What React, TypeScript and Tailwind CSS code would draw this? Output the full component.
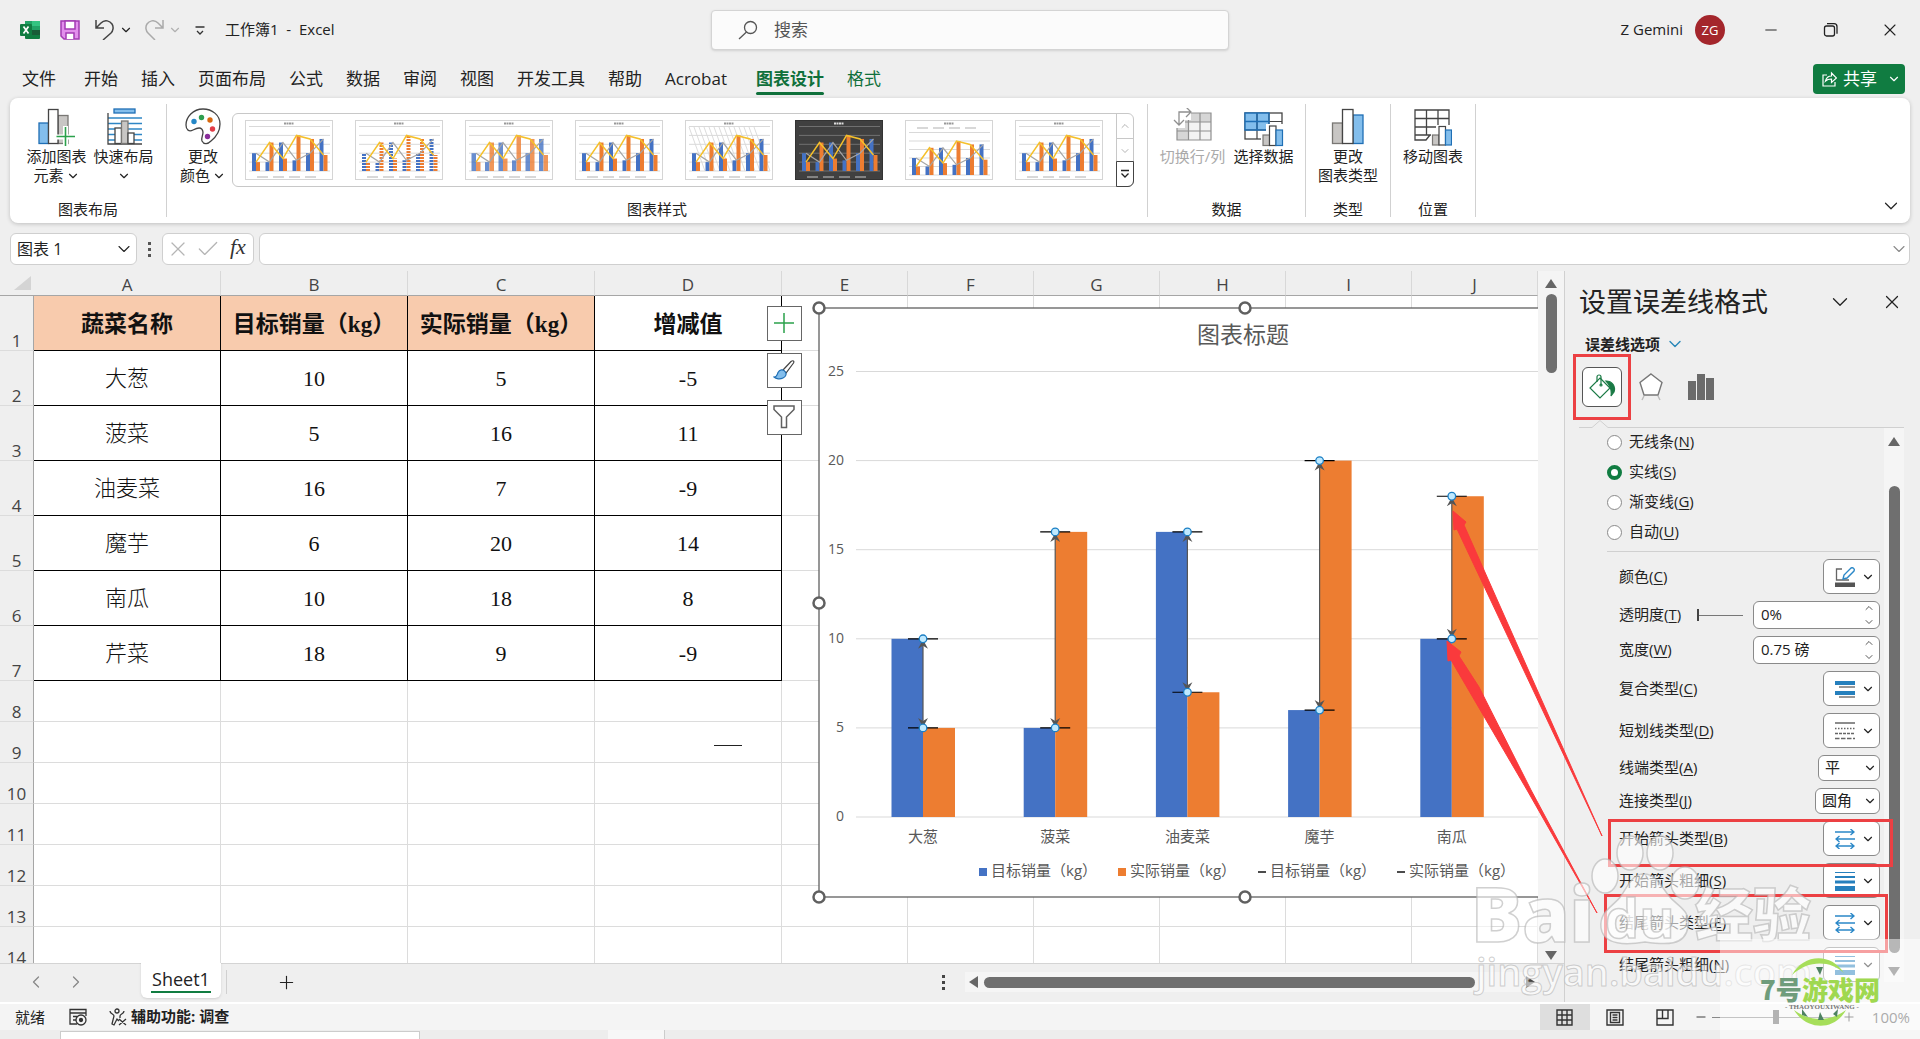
import React from "react";
import { ChevronDown, ChevronLeft, ChevronRight, ChevronUp, Minus, Plus, X, Check } from "lucide-react";

const tabs = ["开始", "插入", "页面布局", "公式", "数据", "审阅", "视图", "开发工具", "帮助", "Acrobat"];

const sales = [
  { name: "大葱", target: 10, actual: 5 },
  { name: "菠菜", target: 5, actual: 16 },
  { name: "油麦菜", target: 16, actual: 7 },
  { name: "魔芋", target: 6, actual: 20 },
  { name: "南瓜", target: 10, actual: 18 },
  { name: "芹菜", target: 18, actual: 9 },
];

const BLUE = "#4472c4";
const ORANGE = "#ed7d31";

/* ---------- Title bar ---------- */

const TitleBar = () => (
  <header className="flex h-[60px] shrink-0 items-center">
    <div className="flex flex-1 items-center pl-5">
      <svg width="20" height="20" viewBox="0 0 20 20">
        <path d="M5 1h14a1 1 0 0 1 1 1v8H5z" fill="#21a366" />
        <path d="M12 1h7a1 1 0 0 1 1 1v4h-8z" fill="#33c481" />
        <path d="M5 10h15v8a1 1 0 0 1-1 1H6a1 1 0 0 1-1-1z" fill="#107c41" />
        <path d="M12 10h8v5h-8z" fill="#185c37" />
        <rect x="0" y="4" width="12" height="12" rx="1" fill="#107c41" />
        <path d="M3.5 6.5l5 7M8.500 6.500l-5 7" stroke="#fff" strokeWidth="1.700" />
      </svg>
      <button aria-label="保存" className="ml-5">
        <svg width="20" height="20" viewBox="0 0 20 20" fill="none" stroke="#a33bb3" strokeWidth="1.5">
          <path d="M1 1h18v18H4l-3-3z" fill="#e28fec" />
          <path d="M5 1h10v8H5zM6 19v-6h8v6" fill="#fff" />
        </svg>
      </button>
      <button aria-label="撤消" className="ml-[15px] flex items-center gap-1">
        <svg width="20" height="20" viewBox="0 0 20 20" fill="none" stroke="#444" strokeWidth="1.5">
          <path d="M1 0v8h8M1 8l5-5c4-4 9-2 11 1s1 7-1 9l-8 7" />
        </svg>
        <ChevronDown size={14} />
      </button>
      <button aria-label="恢复" className="ml-[11px] flex items-center gap-1 text-[#b0b0b0]">
        <svg width="20" height="20" viewBox="0 0 20 20" fill="none" stroke="#aaa" strokeWidth="1.5">
          <path d="M19 0v8h-8M19 8l-5-5c-4-4-9-2-11 1s-1 7 1 9l7 7" />
        </svg>
        <ChevronDown size={14} />
      </button>
      <button aria-label="自定义快速访问工具栏" className="ml-[10px]">
        <svg width="16" height="16" viewBox="0 0 16 16" fill="none" stroke="#333" strokeWidth="1.3">
          <path d="M3.500 5h9M5 9l3 3 3-3" />
        </svg>
      </button>
      <span className="ml-[17px] whitespace-pre pb-[2px] text-[15px]">工作簿1  -  Excel</span>
    </div>
    <label className="ml-5 flex h-10 w-[518px] items-center rounded border border-[#d4d4d4] bg-[#fbfbfb] pl-[26px] shadow-sm">
      <svg width="20" height="20" viewBox="0 0 20 20" fill="none" stroke="#555" strokeWidth="1.3">
        <circle cx="12.500" cy="7.500" r="6" />
        <path d="M8.500 12L1 19" />
      </svg>
      <input aria-label="搜索" placeholder="搜索" className="ml-4 flex-1 bg-transparent text-[17px] outline-none placeholder:text-[#555]" />
    </label>
    <div className="flex flex-1 items-center justify-end pr-5">
      <span className="pb-[2px] text-[15px]">Z Gemini</span>
      <span className="ml-3 flex size-[30px] items-center justify-center rounded-full bg-[#a4262c] text-[13px] text-white">ZG</span>
      <button aria-label="最小化" className="ml-[37px]"><Minus size={18} strokeWidth={1.3} /></button>
      <button aria-label="还原" className="ml-[42px]">
        <svg width="18" height="18" viewBox="0 0 18 18" fill="none" stroke="#222" strokeWidth="1.3">
          <rect x="2.500" y="5" width="10" height="10" rx="2" />
          <path d="M5 2.700h7a3 3 0 0 1 3 3v7" />
        </svg>
      </button>
      <button aria-label="关闭" className="ml-10"><X size={20} strokeWidth={1.3} /></button>
    </div>
  </header>
);

const RibbonTabs = () => (
  <nav className="flex h-[38px] shrink-0 items-center gap-[23px] pr-[15px] pl-[22px] text-[17px]">
    <button className="mr-[5px]">文件</button>
    {tabs.map((t) => (
      <button key={t}>{t}</button>
    ))}
    <button className="relative ml-[6px] font-bold text-[#0f703b]">
      图表设计
      <span className="absolute -bottom-1 left-0 h-[3px] w-full rounded bg-[#0f703b]" />
    </button>
    <button className="text-[#0f703b]">格式</button>
    <button className="ml-auto flex h-[30px] w-[92px] items-center rounded bg-[#107c41] pl-[9px] text-white">
      <svg width="15" height="16" viewBox="0 0 15 16" fill="none" stroke="#fff" strokeWidth="1.200">
        <path d="M5 4H1v11h12v-4M3.500 10c1-4 3-5 6-5V2l5 5-5 4.500V8c-3 0-4.500.5-6 2z" />
      </svg>
      <span className="ml-[6px]">共享</span>
      <ChevronDown size={14} className="ml-[10px]" />
    </button>
  </nav>
);

/* ---------- Ribbon ---------- */

const AddElementIcon = () => (
  <svg width="38" height="39" viewBox="0 0 38 39">
    <rect x="1" y="15" width="9.500" height="20.500" fill="#83beec" stroke="#1f6fb5" strokeWidth="1.300" />
    <rect x="20" y="7.500" width="10" height="28" fill="#c8c6c4" stroke="#797774" strokeWidth="1.300" />
    <rect x="10.500" y="1.500" width="9.500" height="34" fill="#fff" stroke="#444" strokeWidth="1.300" />
    <path d="M27.500 18v21M18 29h20" stroke="#fff" strokeWidth="5" />
    <path d="M27.500 19v19M18.500 28.500h18.500" stroke="#2ba14b" strokeWidth="1.600" />
  </svg>
);

const LayoutIcon = () => (
  <svg width="38" height="39" viewBox="0 0 38 39">
    <rect x="9" y="1" width="21" height="4" fill="#83beec" stroke="#1f6fb5" strokeWidth="1.300" />
    <path d="M3 10h34M3 15.500h34M3 21h34M3 26.500h34M3 32h34" stroke="#2f86c5" strokeWidth="1.400" />
    <path d="M3 5v31h34" fill="none" stroke="#444" strokeWidth="1.300" />
    <rect x="10" y="20" width="6.500" height="15.500" fill="#fff" stroke="#444" strokeWidth="1.300" />
    <rect x="16.500" y="13" width="6.500" height="22.500" fill="#c8c6c4" stroke="#797774" strokeWidth="1.300" />
    <rect x="23" y="25" width="6" height="10.500" fill="#fff" stroke="#444" strokeWidth="1.300" />
  </svg>
);

const PaletteIcon = () => (
  <svg width="38" height="39" viewBox="0 0 38 39">
    <path d="M19 1C9 1 2 9 2 17c0 5 3 7 7 5s9-4 10 2c0 4-2 5-1 9 2 4 6 3 9 0 5-4 9-10 9-17C36 7 28 1 19 1z" fill="#fff" stroke="#444" strokeWidth="1.300" />
    <circle cx="10" cy="13.500" r="2.700" fill="#2487c7" />
    <circle cx="17.500" cy="9.500" r="2.700" fill="#2e9e4f" />
    <circle cx="26" cy="12" r="2.700" fill="#d8690f" />
    <circle cx="28.500" cy="21" r="2.700" fill="#e23c47" />
    <circle cx="23.500" cy="28.500" r="2.700" fill="#8a2f9b" />
  </svg>
);

const SwitchIcon = () => (
  <svg width="40" height="39" viewBox="0 0 40 39">
    <rect x="4" y="5" width="34" height="27" fill="#f3f3f3" />
    <path d="M4 5h34v9H4zM4 14h12v18H4z" fill="#d6d6d6" />
    <path d="M4 5h34v27H4zM4 14h34M4 23h34M15.500 5v27M27 5v27" fill="none" stroke="#8f8f8f" strokeWidth="1.200" />
    <path d="M0 0h18v12H12v8H0z" fill="#fff" />
    <path d="M6 17V4h12M13-1l5 5-5 5M1 12l5 5 5-5" fill="none" stroke="#8f8f8f" strokeWidth="1.300" />
  </svg>
);

const SelectDataIcon = () => (
  <svg width="40" height="39" viewBox="0 0 40 39">
    <rect x="1" y="5" width="37" height="26" fill="#fff" stroke="#444" strokeWidth="1.300" />
    <path d="M1 5h24v17H1z" fill="#83beec" />
    <path d="M1 13.500h37M1 22h37M13 5v26M25 5v26" stroke="#444" strokeWidth="1.200" />
    <path d="M1 5h24v17H1zM1 13.500h24M13 5v17" fill="none" stroke="#1f6fb5" strokeWidth="1.400" />
    <path d="M17 25h5v-9h18v24H17z" fill="#fff" />
    <rect x="19" y="27" width="6.500" height="10.500" fill="#c8c6c4" stroke="#797774" strokeWidth="1.200" />
    <rect x="25.500" y="18" width="6.500" height="19.500" fill="#fff" stroke="#444" strokeWidth="1.200" />
    <rect x="32" y="22" width="6.500" height="15.500" fill="#83beec" stroke="#1f6fb5" strokeWidth="1.200" />
  </svg>
);

const ChartTypeIcon = () => (
  <svg width="38" height="39" viewBox="0 0 38 39">
    <rect x="3.500" y="15" width="10" height="20.500" fill="#c8c6c4" stroke="#797774" strokeWidth="1.300" />
    <rect x="24" y="7" width="10" height="28.500" fill="#83beec" stroke="#1f6fb5" strokeWidth="1.300" />
    <rect x="13.500" y="1.500" width="10.500" height="34" fill="#fff" stroke="#444" strokeWidth="1.300" />
  </svg>
);

const MoveChartIcon = () => (
  <svg width="38" height="39" viewBox="0 0 38 39">
    <path d="M1 2h34v25H16l-4 5H1zM1 10.500h34M1 19h34M1 27h15M12.500 2v25M24 2v20" fill="#fff" stroke="#444" strokeWidth="1.300" />
    <path d="M17 24h5v-7h16v21H17z" fill="#fff" />
    <rect x="18.500" y="27" width="6.500" height="10" fill="#c8c6c4" stroke="#797774" strokeWidth="1.200" />
    <rect x="25" y="18.500" width="6.500" height="18.500" fill="#fff" stroke="#444" strokeWidth="1.200" />
    <rect x="31.500" y="22" width="6" height="15" fill="#83beec" stroke="#1f6fb5" strokeWidth="1.200" />
  </svg>
);

type ThumbKind = "plain" | "striped" | "wide" | "hatched" | "dark" | "topLegend";

const StyleThumb = ({ kind }: { kind: ThumbKind }) => {
  const dark = kind === "dark";
  const base = kind === "topLegend" ? 55 : 51;
  const unit = kind === "topLegend" ? 1.7 : 1.78;
  const w = kind === "wide" ? 4.5 : 4;
  const cx = (i: number) => 11 + i * 13.5;
  const points = (key: "target" | "actual") => sales.map((s, i) => `${cx(i)},${base - s[key] * unit}`).join(" ");
  return (
    <svg width="88" height="60" viewBox="0 0 88 60" fill="none">
      <rect x="0.500" y="0.500" width="87" height="59" fill={dark ? "#404040" : "#fff"} stroke={dark ? "#333" : "#d5d5d5"} />
      {kind === "hatched" &&
        Array.from({ length: 14 }, (_, i) => <path key={i} d={`M${i * 5 + 4} 7l16 44`} stroke="#dcdcdc" strokeWidth="1" />)}
      <path d="M39 3.500h10" stroke={dark ? "#ddd" : "#999"} strokeWidth="2" strokeDasharray="2 .5" />
      {[0, 1, 2, 3, 4, 5].map((g) => (
        <path key={g} d={`M4 ${base - g * unit * 5}h81`} stroke={dark ? "#707070" : "#d9d9d9"} strokeWidth="1" />
      ))}
      {sales.map((s, i) => (
        <g key={s.name} strokeDasharray={kind === "striped" ? "2 1" : undefined} opacity={kind === "wide" ? 0.8 : 1} strokeWidth={w}>
          <path d={`M${cx(i) - w / 2} ${base}V${base - s.target * unit}`} stroke={BLUE} />
          <path d={`M${cx(i) + w / 2} ${base}V${base - s.actual * unit}`} stroke={ORANGE} />
        </g>
      ))}
      <polyline points={points("target")} stroke="#a5a5a5" strokeWidth="1.200" />
      <polyline points={points("actual")} stroke="#f5c02a" strokeWidth="1.500" />
      <path d={kind === "topLegend" ? "M12 8h62" : "M12 57h62"} stroke={dark ? "#999" : "#ccc"} strokeWidth="1.500" strokeDasharray="11 5" />
    </svg>
  );
};

const thumbs: ThumbKind[] = ["plain", "striped", "wide", "plain", "hatched", "dark", "topLegend", "plain"];

type GroupProps = { label: string; className?: string; children: React.ReactNode };

const Group = ({ label, className = "", children }: GroupProps) => (
  <>
    <section className="flex flex-col justify-between pt-[10px] pb-1">
      <div className={`flex ${className}`}>{children}</div>
      <div className="text-center text-[15px] leading-5">{label}</div>
    </section>
    <div className="my-[6px] w-px bg-[#d1d1d1]" />
  </>
);

type RibbonButtonProps = { icon: React.ReactNode; lines: React.ReactNode[]; className: string };

const RibbonButton = ({ icon, lines, className }: RibbonButtonProps) => (
  <button className={`flex flex-col items-center text-[15px] leading-[19px] whitespace-nowrap ${className}`}>
    <span>{icon}</span>
    {lines.map((l, i) => (
      <span key={i} className="flex h-[19px] items-center justify-center">{l}</span>
    ))}
  </button>
);

const Ribbon = () => (
  <div className="mx-[10px] flex h-[125px] shrink-0 rounded-lg bg-white shadow-[0_1px_4px_rgba(0,0,0,0.2)]">
    <Group label="图表布局" className="w-[156px] pl-[13px]">
      <RibbonButton className="w-[67px]" icon={<AddElementIcon />} lines={["添加图表", <>元素 <ChevronDown size={14} className="ml-[2px]" /></>]} />
      <RibbonButton className="w-[67px]" icon={<LayoutIcon />} lines={["快速布局", <ChevronDown size={14} />]} />
    </Group>
    <Group label="图表样式" className="pr-[13px] pl-[7px]">
      <RibbonButton className="w-[58px]" icon={<PaletteIcon />} lines={["更改", <>颜色 <ChevronDown size={14} className="ml-[2px]" /></>]} />
      <div className="mt-[5px] flex h-[74px] rounded-md border border-[#c8c8c8]">
        <div className="flex w-[883px] items-center gap-[22px] pl-3">
          {thumbs.map((kind, i) => (
            <button key={i} aria-label={`样式 ${i + 1}`}><StyleThumb kind={kind} /></button>
          ))}
        </div>
        <div className="flex w-[17px] flex-col border-l border-[#c8c8c8] text-[#999]">
          <button aria-label="上一行" className="flex flex-1 items-center justify-center border-b border-[#c8c8c8]"><ChevronUp size={12} strokeWidth={1.5} /></button>
          <button aria-label="下一行" className="flex flex-1 items-center justify-center"><ChevronDown size={12} strokeWidth={1.5} /></button>
          <button aria-label="其他" className="-m-px flex flex-1 items-center justify-center rounded-br-md border border-[#444]">
            <svg width="10" height="10" viewBox="0 0 10 10" fill="none" stroke="#222" strokeWidth="1.300">
              <path d="M1 1.500h8M1.500 4.500L5 8l3.500-3.500" />
            </svg>
          </button>
        </div>
      </div>
    </Group>
    <Group label="数据" className="pr-[6px] pl-[9px]">
      <RibbonButton className="w-[71px] text-[#aaa]" icon={<SwitchIcon />} lines={["切换行/列"]} />
      <RibbonButton className="w-[71px]" icon={<SelectDataIcon />} lines={["选择数据"]} />
    </Group>
    <Group label="类型">
      <RibbonButton className="w-[84px]" icon={<ChartTypeIcon />} lines={["更改", "图表类型"]} />
    </Group>
    <Group label="位置">
      <RibbonButton className="w-[84px]" icon={<MoveChartIcon />} lines={["移动图表"]} />
    </Group>
    <button aria-label="折叠功能区" className="mt-auto mr-2 mb-[6px] ml-auto"><ChevronDown size={22} strokeWidth={1.3} /></button>
  </div>
);

const FormulaBar = () => (
  <div className="mx-[10px] mt-[10px] flex h-8 shrink-0 items-stretch">
    <div className="flex w-[127px] items-center rounded-md border border-[#cfcfcf] bg-white pr-[2px] pl-[6px]">
      <input aria-label="名称框" defaultValue="图表 1" className="w-full min-w-0 flex-1 text-base outline-none" />
      <ChevronDown size={20} strokeWidth={1.3} className="shrink-0" />
    </div>
    <div className="flex w-[25px] flex-col items-center justify-center gap-[3px]">
      <i className="size-[3px] bg-[#555]" />
      <i className="size-[3px] bg-[#555]" />
      <i className="size-[3px] bg-[#555]" />
    </div>
    <div className="flex w-[92px] items-center rounded-md border border-[#cfcfcf] bg-white pl-[3px] text-[#b5b5b5]">
      <button aria-label="取消"><X size={24} strokeWidth={1.2} /></button>
      <button aria-label="输入" className="ml-[5px]"><Check size={26} strokeWidth={1.2} /></button>
      <button className="ml-[9px] pb-1 font-['Liberation_Serif',serif] text-[22px] leading-6 text-[#333] italic">fx</button>
    </div>
    <div className="ml-[5px] flex flex-1 items-center rounded-md border border-[#cfcfcf] bg-white">
      <input aria-label="编辑栏" className="flex-1 outline-none" />
      <ChevronDown size={20} strokeWidth={1.3} className="text-[#888]" />
    </div>
  </div>
);

/* ---------- Sheet ---------- */

const headCell = "border-r border-b border-black pt-1 text-[23px] font-bold";
const dataCell = "border-r border-b border-black pt-[2px] text-[22px] font-light";
const blankCell = "border-r border-b border-[#dcdcdc]";
const rowHead = "border-r border-b border-r-[#a6a6a6] border-b-[#dcdcdc] bg-[#efefef] align-bottom text-[17px] leading-[18px] font-normal text-[#444]";

const Blanks = ({ n }: { n: number }) => (
  <>
    {Array.from({ length: n }, (_, i) => <td key={i} className={blankCell} />)}
  </>
);

const Grid = () => (
  <table className="w-[1538px] table-fixed border-separate border-spacing-0 bg-white text-center">
    <colgroup>
      <col className="w-[34px]" />
      {[1, 2, 3, 4].map((c) => <col key={c} className="w-[187px]" />)}
      {[1, 2, 3, 4, 5, 6].map((c) => <col key={c} className="w-[126px]" />)}
    </colgroup>
    <thead>
      <tr className="h-[25px] bg-[#efefef] text-[17px] leading-5 text-[#444]">
        <th className="border-b border-[#a6a6a6]">
          <svg width="17" height="14" viewBox="0 0 17 14" className="ml-[14px]"><path d="M17 0v14H0z" fill="#d4d4d4" /></svg>
        </th>
        {"ABCDEFGHIJ".split("").map((c) => (
          <th key={c} className="border-r border-b border-r-[#d8d8d8] border-b-[#a6a6a6] pt-1 font-normal">{c}</th>
        ))}
      </tr>
    </thead>
    <tbody className="font-['Liberation_Serif','Noto_Sans_CJK_SC',serif] leading-7 text-[#111]">
      <tr className="h-[55px]">
        <th className={`${rowHead} font-['Open_Sans',sans-serif]`}>1</th>
        <th className={`${headCell} bg-[#f8cbad]`}>蔬菜名称</th>
        <th className={`${headCell} bg-[#f8cbad] whitespace-nowrap`}>目标销量（kg）</th>
        <th className={`${headCell} bg-[#f8cbad] whitespace-nowrap`}>实际销量（kg）</th>
        <th className={headCell}>增减值</th>
        <Blanks n={6} />
      </tr>
      {sales.map((s, i) => (
        <tr key={s.name} className="h-[55px]">
          <th className={`${rowHead} font-['Open_Sans',sans-serif]`}>{i + 2}</th>
          <td className={dataCell}>{s.name}</td>
          <td className={dataCell}>{s.target}</td>
          <td className={dataCell}>{s.actual}</td>
          <td className={dataCell}>{s.actual - s.target}</td>
          <Blanks n={6} />
        </tr>
      ))}
      {[8, 9, 10, 11, 12, 13, 14].map((r) => (
        <tr key={r} className="h-[41px]">
          <th className={`${rowHead} font-['Open_Sans',sans-serif]`}>{r}</th>
          <Blanks n={10} />
        </tr>
      ))}
    </tbody>
  </table>
);

const Handle = ({ x, y }: { x: number; y: number }) => (
  <circle cx={x} cy={y} r="5.500" fill="#fff" stroke="#606060" strokeWidth="2.500" />
);

const legend = [
  { x: 171, text: "目标销量（kg）", color: BLUE },
  { x: 310, text: "实际销量（kg）", color: ORANGE },
  { x: 450, text: "目标销量（kg）" },
  { x: 589, text: "实际销量（kg）" },
];

const Chart = () => {
  const zero = 517;
  const yOf = (v: number) => zero - v * 17.82;
  const xOf = (i: number) => 115 + i * 132.2;
  return (
    <svg className="absolute top-[29px] left-[808px]" width="730" height="606" viewBox="0 0 730 606">
      <rect x="11" y="8" width="852" height="589" fill="#fff" stroke="#606060" strokeWidth="1.300" />
      <text x="435" y="43" textAnchor="middle" fontSize="23" fill="#595959">图表标题</text>
      {[0, 5, 10, 15, 20, 25].map((v) => (
        <g key={v}>
          <path d={`M48 ${yOf(v)}H730`} stroke="#d9d9d9" />
          <text x="36" y={yOf(v) + 4} textAnchor="end" fontSize="14" fill="#595959">{v}</text>
        </g>
      ))}
      {sales.slice(0, 5).map((s, i) => {
        const x = xOf(i);
        const top = yOf(Math.max(s.target, s.actual));
        const low = yOf(Math.min(s.target, s.actual));
        return (
          <g key={s.name}>
            <rect x={x - 31.5} y={yOf(s.target)} width="31.500" height={zero - yOf(s.target)} fill={BLUE} />
            <rect x={x} y={yOf(s.actual)} width="32" height={zero - yOf(s.actual)} fill={ORANGE} />
            <path d={`M${x} ${top}V${low}`} stroke="#555" strokeWidth="1.200" />
            <path d={`M${x - 15} ${top}h30M${x - 15} ${low}h30`} stroke="#000" strokeWidth="1.200" />
            <path d={`M${x} ${top + 1}l5 9-5-3-5 3zM${x} ${low - 1}l5-9-5 3-5-3z`} fill="#555" />
            <circle cx={x} cy={top} r="3.800" fill="#bfe9ff" stroke="#1b7fc4" strokeWidth="1.300" />
            <circle cx={x} cy={low} r="3.800" fill="#bfe9ff" stroke="#1b7fc4" strokeWidth="1.300" />
            <text x={x} y="542" textAnchor="middle" fontSize="15" fill="#595959">{s.name}</text>
          </g>
        );
      })}
      {legend.map((l) => (
        <g key={l.x}>
          {l.color ? <rect x={l.x} y="568" width="8" height="8" fill={l.color} /> : <path d={`M${l.x} 572h8`} stroke="#111" strokeWidth="1.500" />}
          <text x={l.x + 12} y="576" fontSize="15" fill="#595959">{l.text}</text>
        </g>
      ))}
      <Handle x={11} y={8} />
      <Handle x={437} y={8} />
      <Handle x={11} y={303} />
      <Handle x={11} y={597} />
      <Handle x={437} y={597} />
    </svg>
  );
};

const floatButton = "flex size-[35px] items-center justify-center border border-[#666] bg-white pr-[2px] pb-[2px]";

const ChartTools = () => (
  <div className="absolute top-[35px] left-[767px] flex flex-col gap-3">
    <button aria-label="图表元素" className={floatButton}>
      <svg width="22" height="22" viewBox="0 0 22 22" stroke="#2ba14b" strokeWidth="1.500"><path d="M11 1v20M1 11h20" /></svg>
    </button>
    <button aria-label="图表样式" className={floatButton}>
      <svg width="22" height="22" viewBox="0 0 22 22">
        <path d="M10 11L18 2.500c2-1.500 3.500-.5 2.500 1.500L13 14z" fill="#fff" stroke="#444" strokeWidth="1.200" />
        <path d="M1 18c3 0 3-2 4-4.500C6.500 10.500 10 10 12 12.500s1 5-2 6.500-7 1-9-1z" fill="#83beec" stroke="#1f6fb5" strokeWidth="1.200" />
      </svg>
    </button>
    <button aria-label="图表筛选器" className={floatButton}>
      <svg width="22" height="24" viewBox="0 0 22 24" fill="none" stroke="#606060" strokeWidth="1.500">
        <path d="M1 1h20v3.500l-7.500 7.500v10.500h-5V12L1 4.500z" />
      </svg>
    </button>
  </div>
);

const SheetTabs = () => (
  <div className="flex h-[39px] shrink-0 items-center border-t border-[#d4d4d4] pb-[2px]">
    <button aria-label="上一张工作表" className="ml-[26px] text-[#888]"><ChevronLeft size={20} strokeWidth={1.5} /></button>
    <button aria-label="下一张工作表" className="ml-5 text-[#888]"><ChevronRight size={20} strokeWidth={1.5} /></button>
    <button className="-mt-1 ml-[55px] flex h-[36px] w-20 flex-col items-center justify-center rounded-b-md bg-white text-[18px] leading-6 shadow-sm">
      Sheet1
      <span className="h-[2px] w-[60px] bg-[#107c41]" />
    </button>
    <div className="ml-[5px] h-6 w-px bg-[#d0d0d0]" />
    <button aria-label="新工作表" className="ml-[49px]"><Plus size={21} strokeWidth={1.3} /></button>
    <div className="ml-auto flex flex-col gap-[3px]">
      <i className="h-[3px] w-[3px] bg-[#444]" />
      <i className="h-[3px] w-[3px] bg-[#444]" />
      <i className="h-[3px] w-[3px] bg-[#444]" />
    </div>
    <div className="ml-5 flex h-5 w-[573px] items-center bg-[#f5f5f5] pl-1">
      <svg width="9" height="12" viewBox="0 0 9 12"><path d="M9 0v12L0 6z" fill="#666" /></svg>
      <div className="ml-[6px] h-[11px] w-[491px] rounded-full bg-[#6f6f6f]" />
      <svg width="9" height="12" viewBox="0 0 9 12" className="ml-auto mr-[3px]"><path d="M0 0v12l9-6z" fill="#444" /></svg>
    </div>
    <div className="w-[26px]" />
  </div>
);

const Sheet = () => (
  <main className="flex min-w-0 flex-1 flex-col">
    <div className="flex min-h-0 flex-1">
      <div className="relative min-w-0 flex-1 overflow-hidden bg-white">
        <Grid />
        <div className="absolute top-[474px] left-[714px] h-px w-7 bg-[#222]" />
        <Chart />
        <ChartTools />
      </div>
      <div className="flex w-[26px] flex-col items-center bg-[#f4f4f4] pt-2 pb-[3px]">
        <svg width="12" height="9" viewBox="0 0 12 9"><path d="M6 0l6 9H0z" fill="#666" /></svg>
        <div className="mt-[6px] h-[79px] w-[11px] rounded-full bg-[#6f6f6f]" />
        <svg width="12" height="9" viewBox="0 0 12 9" className="mt-auto"><path d="M6 9l6-9H0z" fill="#666" /></svg>
      </div>
    </div>
    <SheetTabs />
  </main>
);

/* ---------- Format pane ---------- */

const Mnemonic = ({ text, k }: { text: string; k: string }) => (
  <>
    {text}(<u className="underline-offset-2">{k}</u>)
  </>
);

const radios = [
  ["无线条", "N"],
  ["实线", "S"],
  ["渐变线", "G"],
  ["自动", "U"],
];

type RowProps = { id: string; text: string; k: string; children: React.ReactNode };

const Row = ({ id, text, k, children }: RowProps) => (
  <div className="flex items-center">
    <label htmlFor={id} className="mr-auto pb-[2px]"><Mnemonic text={text} k={k} /></label>
    {children}
  </div>
);

const IconDrop = ({ id, children }: { id: string; children: React.ReactNode }) => (
  <button id={id} className="flex h-[35px] w-[57px] items-center justify-between rounded-md border border-[#8a8a8a] bg-white pr-1 pl-[11px]">
    <svg width="20" height="20" viewBox="0 0 20 20" fill="none">{children}</svg>
    <ChevronDown size={14} />
  </button>
);

const Spin = ({ id, value }: { id: string; value: string }) => (
  <div className="flex h-7 w-[127px] items-center rounded-md border border-[#8a8a8a] bg-white pr-1 pl-[7px]">
    <input id={id} defaultValue={value} className="w-full min-w-0 flex-1 pb-[2px] outline-none" />
    <div className="flex flex-col gap-[2px]">
      <button aria-label="增加"><ChevronUp size={12} strokeWidth={1.5} className="block" /></button>
      <button aria-label="减少"><ChevronDown size={12} strokeWidth={1.5} className="block" /></button>
    </div>
  </div>
);

const TextDrop = ({ id, value, className }: { id: string; value: string; className: string }) => (
  <div className={`relative h-[26px] ${className}`}>
    <select id={id} className="size-full appearance-none rounded-md border border-[#8a8a8a] bg-white pb-[2px] pl-[6px] leading-5">
      <option>{value}</option>
    </select>
    <ChevronDown size={14} className="pointer-events-none absolute top-[6px] right-[3px]" />
  </div>
);

const ArrowsGlyph = () => (
  <path d="M0 3h19M15.500 0L19 3l-3.500 3M20 10H1M4.500 7L1 10l3.500 3M1 17h18M4.500 14L1 17l3.500 3M15.500 14l3.500 3-3.500 3" stroke="#2b88c8" strokeWidth="1.400" />
);

const WeightGlyph = () => (
  <path d="M0 1h20v1H0zM0 5h20v2H0zM0 9.500h20v3H0zM0 15h20v5H0z" fill="#2680bd" />
);

const FormatPane = () => (
  <aside className="flex w-[356px] shrink-0 flex-col overflow-hidden border-l border-[#d0d0d0] text-[15px] leading-5">
    <div className="flex h-[61px] items-center pl-[14px]">
      <h2 className="text-[27px] leading-9">设置误差线格式</h2>
      <button aria-label="窗格选项" className="mr-7 ml-auto"><ChevronDown size={26} strokeWidth={1.2} /></button>
      <button aria-label="关闭窗格" className="mr-[17px]"><X size={22} strokeWidth={1.3} /></button>
    </div>
    <button className="mt-[2px] ml-5 flex h-5 items-center gap-[5px] self-start font-bold">
      误差线选项
      <ChevronDown size={20} strokeWidth={1.7} className="text-[#2b88b8]" />
    </button>
    <div className="flex h-[66px] items-center pl-2">
      <div className="flex h-[66px] w-[58px] items-center justify-center border-[3px] border-[#ec4043]">
        <button aria-label="填充与线条" className="flex size-10 items-center justify-center rounded-md border border-[#555] bg-white">
          <svg width="28" height="26" viewBox="0 0 28 26" fill="none" stroke="#1a7a45" strokeWidth="1.200">
            <path d="M12 4L22 14 12 24 2 14z" />
            <path d="M9 8V3a2 2 0 0 1 4 0v8" />
            <circle cx="13" cy="11" r="1" />
            <path d="M18 7c6 0 10 5 8 11l-3 4c1-6-1-11-5-15z" fill="#1a7a45" />
          </svg>
        </button>
      </div>
      <button aria-label="效果" className="ml-2">
        <svg width="24" height="28" viewBox="0 0 24 28" fill="none" stroke="#777" strokeWidth="1.400">
          <path d="M12 1l11 8.500L19 22H5L1 9.500z" fill="#fff" />
          <path d="M5 23l-2 4M19 23l2 4" stroke="#bbb" />
        </svg>
      </button>
      <button aria-label="误差线选项" className="ml-[25px]">
        <svg width="26" height="26" viewBox="0 0 26 26" fill="#6b6b6b"><path d="M0 7h8v19H0zM9 0h8v26H9zM18 4h8v22h-8z" /></svg>
      </button>
    </div>
    <svg width="325" height="8" viewBox="0 0 325 8" fill="none" className="ml-[14px] shrink-0">
      <path d="M0 7.500h13l8-7 8 7h296" stroke="#d0d0d0" />
    </svg>
    <div className="flex min-h-0 flex-1">
      <div className="ml-[42px] w-[273px] overflow-hidden">
        <div className="flex flex-col gap-[10px] pt-1 pb-[9px]">
          {radios.map(([text, k]) => (
            <label key={k} className="flex h-5 items-center gap-[7px]">
              <input
                type="radio"
                name="line"
                defaultChecked={k === "S"}
                className="size-[15px] appearance-none rounded-full border border-[#8a8a8a] bg-white checked:border-4 checked:border-[#107c41]"
              />
              <span className="pb-[2px]"><Mnemonic text={text} k={k} /></span>
            </label>
          ))}
        </div>
        <div className="flex flex-col gap-[7px] border-t border-[#d0d0d0] pt-[7px] pl-3">
          <Row id="color" text="颜色" k="C">
            <IconDrop id="color">
              <path d="M7 2H1.500v11H14" stroke="#666" strokeWidth="1.300" />
              <path d="M8 12l1-4 7-7c2-1 4 1 3 3l-7 7z" fill="#fff" stroke="#2b88c8" strokeWidth="1.400" />
              <path d="M0 15.500h20v4.500H0z" fill="#555" />
            </IconDrop>
          </Row>
          <Row id="alpha" text="透明度" k="T">
            <input
              type="range"
              aria-label="透明度滑块"
              defaultValue={0}
              className="mr-[10px] h-px w-[46px] appearance-none bg-[#777] [&::-webkit-slider-thumb]:h-3 [&::-webkit-slider-thumb]:w-[2px] [&::-webkit-slider-thumb]:appearance-none [&::-webkit-slider-thumb]:bg-[#444]"
            />
            <Spin id="alpha" value="0%" />
          </Row>
          <Row id="width" text="宽度" k="W">
            <Spin id="width" value="0.75 磅" />
          </Row>
          <Row id="compound" text="复合类型" k="C">
            <IconDrop id="compound">
              <path d="M0 2h20v4H0zM0 12h20v4H0z" fill="#2680bd" />
              <path d="M4 8h16M4 18h16" stroke="#777" strokeWidth="1.500" />
            </IconDrop>
          </Row>
          <Row id="dash" text="短划线类型" k="D">
            <IconDrop id="dash">
              <path d="M0 2h20" stroke="#666" strokeWidth="1.500" />
              <path d="M0 7.500h20" stroke="#666" strokeWidth="1.500" strokeDasharray="1.500 1.500" />
              <path d="M0 12.500h20" stroke="#666" strokeWidth="1.500" strokeDasharray="3 1" />
              <path d="M0 17.500h20" stroke="#666" strokeWidth="1.500" strokeDasharray="4.500 1.500" />
            </IconDrop>
          </Row>
          <Row id="cap" text="线端类型" k="A">
            <TextDrop id="cap" value="平" className="w-[62px]" />
          </Row>
          <Row id="join" text="连接类型" k="J">
            <TextDrop id="join" value="圆角" className="w-[65px]" />
          </Row>
          <Row id="begin-type" text="开始箭头类型" k="B"><IconDrop id="begin-type"><ArrowsGlyph /></IconDrop></Row>
          <Row id="begin-size" text="开始箭头粗细" k="S"><IconDrop id="begin-size"><WeightGlyph /></IconDrop></Row>
          <Row id="end-type" text="结尾箭头类型" k="E"><IconDrop id="end-type"><ArrowsGlyph /></IconDrop></Row>
          <Row id="end-size" text="结尾箭头粗细" k="N"><IconDrop id="end-size"><WeightGlyph /></IconDrop></Row>
        </div>
      </div>
      <div className="mb-5 ml-1 flex w-5 flex-col items-center bg-[#f5f5f5] pt-[9px] pb-[6px]">
        <svg width="12" height="9" viewBox="0 0 12 9"><path d="M6 0l6 9H0z" fill="#666" /></svg>
        <div className="mt-10 mb-[14px] w-[11px] flex-1 rounded-full bg-[#6f6f6f]" />
        <svg width="12" height="9" viewBox="0 0 12 9"><path d="M6 9l6-9H0z" fill="#666" /></svg>
      </div>
    </div>
  </aside>
);

/* ---------- Status bar ---------- */

const StatusBar = () => (
  <footer className="flex h-7 shrink-0 items-center border-t-2 border-white bg-[#f4f4f4] text-[15px] leading-5">
    <span className="ml-[15px]">就绪</span>
    <svg width="18" height="18" viewBox="0 0 18 18" fill="none" stroke="#333" strokeWidth="1.300" className="ml-6">
      <path d="M8 16H1V1.500h16V8M1 5h16M4 8.500h4M4 12h3" />
      <circle cx="12" cy="12" r="5" />
      <circle cx="12" cy="12" r="1.500" fill="#333" />
    </svg>
    <button className="ml-[22px] flex items-center gap-1 font-bold">
      <svg width="18" height="18" viewBox="0 0 18 18" fill="none" stroke="#333" strokeWidth="1.300">
        <circle cx="8" cy="3" r="2" />
        <path d="M1 3c0 3 4 3 4 5l-2 8 2 1 3-6 2 2M15 3c0 3-4 3-4 5v2M10 11l7 6M17 11l-7 6" />
      </svg>
      <span className="pb-[2px]">辅助功能: 调查</span>
    </button>
    <div className="ml-auto flex h-full items-center">
      <button aria-label="普通" className="flex h-full w-[50px] items-center justify-center bg-[#dedede]">
        <svg width="17" height="17" viewBox="0 0 17 17" fill="none" stroke="#333" strokeWidth="1.400"><path d="M1 1h15v15H1zM1 6h15M1 11h15M6 1v15M11 1v15" /></svg>
      </button>
      <button aria-label="页面布局" className="flex h-full w-[50px] items-center justify-center">
        <svg width="18" height="17" viewBox="0 0 18 17" fill="none" stroke="#333" strokeWidth="1.400"><path d="M1 1h16v15H1zM4.500 3.500h9v10h-9zM6.500 6h5M6.500 8.500h5M6.500 11h5" /></svg>
      </button>
      <button aria-label="分页预览" className="flex h-full w-[50px] items-center justify-center">
        <svg width="18" height="17" viewBox="0 0 18 17" fill="none" stroke="#333" strokeWidth="1.400"><path d="M1 1h16v15H1zM1 9.500h11V1M6.500 1v8.500" /></svg>
      </button>
      <button aria-label="缩小" className="ml-1"><Minus size={14} strokeWidth={1.5} /></button>
      <input
        type="range"
        aria-label="显示比例"
        defaultValue={53}
        className="ml-1 h-px w-[122px] appearance-none bg-[#888] [&::-webkit-slider-thumb]:h-[14px] [&::-webkit-slider-thumb]:w-[6px] [&::-webkit-slider-thumb]:appearance-none [&::-webkit-slider-thumb]:bg-[#666]"
      />
      <button aria-label="放大" className="ml-2"><Plus size={14} strokeWidth={1.5} /></button>
      <span className="mr-[10px] ml-4 text-[#555]">100%</span>
    </div>
  </footer>
);

const Taskbar = () => (
  <div className="flex h-[9px] shrink-0 items-end overflow-hidden bg-[#ededed]">
    <div className="ml-[60px] h-2 w-[360px] border border-b-0 border-[#ccc] bg-white" />
    <div className="ml-[188px] h-[9px] w-[57px] border-r border-[#ccc] bg-[#f7f7f7]" />
  </div>
);

/* ---------- Red call-outs and site marks lying over the window ---------- */

const Overlay = () => (
  <svg className="pointer-events-none absolute right-0 bottom-0" width="490" height="540" viewBox="1430 499 490 540">
    <g fill="#fa3a3c" stroke="#fa3a3c" strokeWidth="1" strokeLinejoin="round">
      <path d="M1453 511L1466 522 1464 525 1602 836 1457 529 1454 530z" />
      <path d="M1447 641L1461 652 1459 656 1479 687 1531 790 1597 913 1527 790 1451 660 1448 661z" />
    </g>
    <g fill="none" stroke="#ec4043" strokeWidth="3">
      <rect x="1609.500" y="820.500" width="282" height="45" />
      <rect x="1605.500" y="895.500" width="281" height="56" />
    </g>

    <g fill="#fff" fillOpacity="0.6" stroke="#b0b0b0" strokeOpacity="0.6" strokeWidth="1.500">
      <ellipse cx="1605" cy="876" rx="13" ry="17" />
      <ellipse cx="1630" cy="853" rx="13" ry="17" />
      <ellipse cx="1660" cy="853" rx="13" ry="17" />
      <ellipse cx="1685" cy="883" rx="14" ry="16" />
      <path d="M1644 874c12 0 17 12 25 22s22 14 19 31c-3 19-22 18-43 15-18 3-41 4-44-14-2-17 13-22 20-32s11-22 23-22z" />
      <text x="1471" y="942" fontFamily="Open Sans" fontWeight="800" fontSize="76">Bai</text>
      <text x="1605" y="938" fontFamily="Open Sans" fontWeight="700" fontSize="54">du</text>
      <text x="1695" y="936" fontFamily="Noto Sans CJK SC" fontWeight="900" fontSize="58">经验</text>
      <text x="1476" y="986" fontFamily="Open Sans" fontWeight="600" fontSize="38" strokeWidth="1">jingyan.baidu.com</text>
    </g>

    <rect x="1720" y="939" width="200" height="100" fill="#fff" fillOpacity="0.5" />
    <path d="M1792 975c10-20 38-24 52-2-14-13-36-13-52 2zM1794 1010c12 20 40 22 52 0-16 12-36 12-52 0z" fill="#a6de5a" />
    <path d="M1816 967h7l-3 8zM1802 1009l6 8-6-2zM1820 1012l4 8h-6zM1838 1009l-1 8-4-3z" fill="#4d8260" />
    <text x="1760" y="1000" fontFamily="Noto Sans CJK SC" fontWeight="900" fontSize="26" fill="#6f9c7b">7号</text>
    <text x="1802" y="1000" fontFamily="Noto Sans CJK SC" fontWeight="900" fontSize="26" fill="#9fd850">游戏网</text>
    <text x="1785" y="1009" fontFamily="Liberation Serif" fontWeight="700" fontSize="7" fill="#777">- THAOYOUXIWANG -</text>
    <text x="1787" y="1049" fontFamily="Open Sans" fontSize="15" fill="#777">20:50</text>
  </svg>
);

const App = () => {
  return (
    <div className="relative flex h-screen flex-col overflow-hidden bg-[#efefef] font-['Open_Sans','Noto_Sans_CJK_SC',sans-serif] leading-6 text-[#222]">
      <TitleBar />
      <RibbonTabs />
      <Ribbon />
      <FormulaBar />
      <div className="mt-[6px] flex min-h-0 flex-1">
        <Sheet />
        <FormatPane />
      </div>
      <StatusBar />
      <Taskbar />
      <Overlay />
    </div>
  );
};

export default App;
